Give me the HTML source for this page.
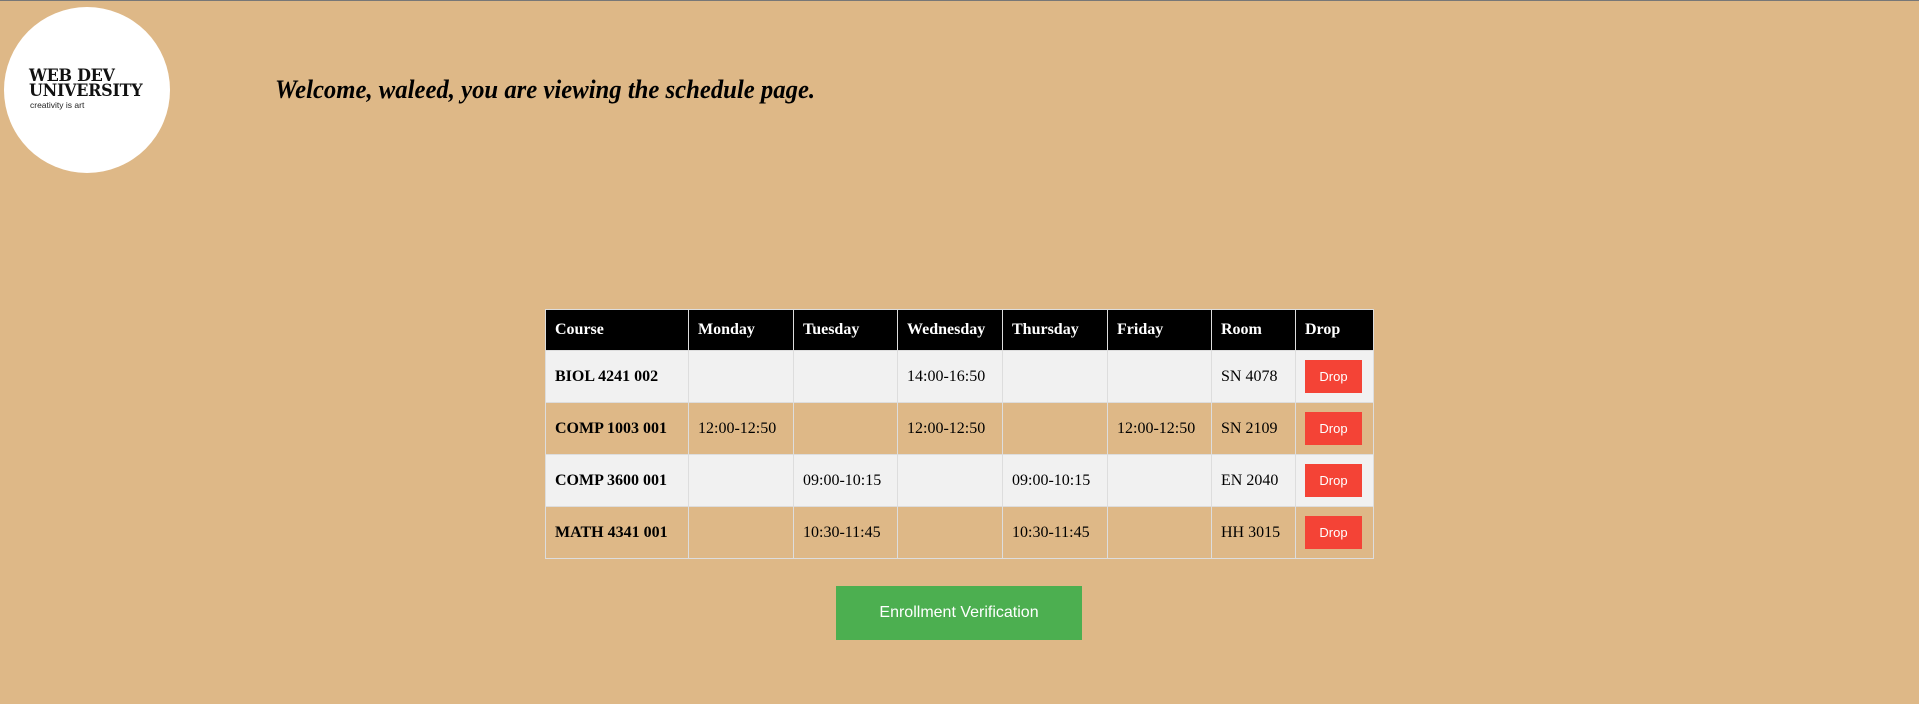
<!DOCTYPE html>
<html><head><meta charset="utf-8"><style>
html,body{margin:0;padding:0;background:#fff;}
#page{position:relative;width:1919px;height:704px;background:#DEB887;border-top:1px solid #777;box-sizing:border-box;overflow:hidden;font-family:"Liberation Serif",serif;}
.logo{position:absolute;left:4px;top:6px;width:166px;height:166px;border-radius:50%;background:#fff;}
.lt{position:absolute;left:29px;font-family:"DejaVu Serif","Liberation Serif",serif;font-weight:bold;font-size:17px;line-height:15px;color:#111;transform:scaleX(0.94);transform-origin:left;letter-spacing:-0.3px;}
.tag{position:absolute;left:30px;top:99px;font-family:"Liberation Sans",sans-serif;font-size:8.5px;color:#222;}
h1{position:absolute;left:275px;top:74px;margin:0;font-size:26px;font-style:italic;font-weight:bold;color:#000;transform:scaleX(0.95);transform-origin:left;white-space:nowrap;}
table{position:absolute;left:545px;top:308px;border-collapse:collapse;font-size:16px;table-layout:fixed;width:828px;}
td,th{border:1px solid #ddd;padding:0 9px;text-align:left;height:51px;white-space:nowrap;overflow:hidden;}
th{background:#000;color:#fff;height:40px;border-color:#ddd;}
tr.l td{background:#f1f1f1;}
td.c{font-weight:bold;}
.drop{display:inline-block;background:#f44336;color:#fff;font-family:"Liberation Sans",sans-serif;font-size:13px;width:57px;height:33px;line-height:33px;text-align:center;}
.enr{position:absolute;left:836px;top:585px;width:246px;height:54px;background:#4CAF50;color:#fff;font-family:"Liberation Sans",sans-serif;font-size:16px;line-height:54px;text-align:center;}
</style></head><body><div id="page">
<div class="logo"></div>
<div class="lt" style="top:68px">WEB DEV</div>
<div class="lt" style="top:83px">UNIVERSITY</div>
<div class="tag">creativity is art</div>
<h1>Welcome, waleed, you are viewing the schedule page.</h1>
<table>
<colgroup><col style="width:143px"><col style="width:105px"><col style="width:104px"><col style="width:105px"><col style="width:105px"><col style="width:104px"><col style="width:84px"><col style="width:78px"></colgroup>
<tr><th>Course</th><th>Monday</th><th>Tuesday</th><th>Wednesday</th><th>Thursday</th><th>Friday</th><th>Room</th><th>Drop</th></tr>
<tr class="l"><td class="c">BIOL 4241 002</td><td></td><td></td><td>14:00-16:50</td><td></td><td></td><td>SN 4078</td><td><span class="drop">Drop</span></td></tr>
<tr><td class="c">COMP 1003 001</td><td>12:00-12:50</td><td></td><td>12:00-12:50</td><td></td><td>12:00-12:50</td><td>SN 2109</td><td><span class="drop">Drop</span></td></tr>
<tr class="l"><td class="c">COMP 3600 001</td><td></td><td>09:00-10:15</td><td></td><td>09:00-10:15</td><td></td><td>EN 2040</td><td><span class="drop">Drop</span></td></tr>
<tr><td class="c">MATH 4341 001</td><td></td><td>10:30-11:45</td><td></td><td>10:30-11:45</td><td></td><td>HH 3015</td><td><span class="drop">Drop</span></td></tr>
</table>
<div class="enr">Enrollment Verification</div>
</div></body></html>
